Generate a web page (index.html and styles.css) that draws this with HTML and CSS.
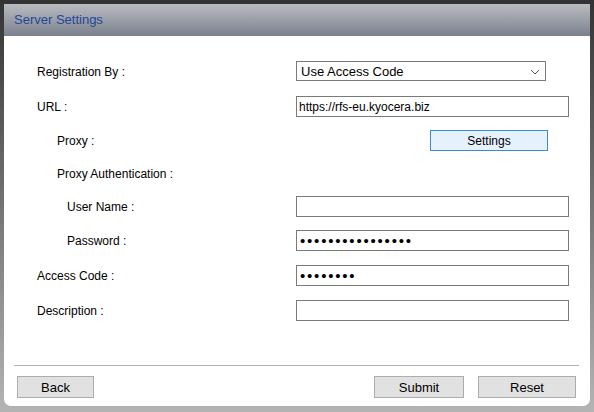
FILE: index.html
```html
<!DOCTYPE html>
<html lang="en">
<head>
  <meta charset="UTF-8" />
  <title>Server Settings</title>
  <link rel="stylesheet" href="styles.css">
</head>
<body>
  <div class="dialog">
    <div class="dialog-title">Server Settings</div>

    <div class="form">
      <div class="row">
        <label class="lbl">Registration By :</label>
        <div class="select-wrap">
          <select class="select">
            <option>Use Access Code</option>
            <option>Use Login Account</option>
          </select>
          <svg class="chevron" width="10" height="6" viewBox="0 0 10 6"><path d="M1 1 L5 5 L9 1" fill="none" stroke="#555" stroke-width="1"/></svg>
        </div>
      </div>
      <div class="row">
        <label class="lbl">URL :</label>
        <input class="field" type="text" value="https://rfs-eu.kyocera.biz" />
      </div>
      <div class="row tight">
        <label class="lbl sub">Proxy :</label>
        <button class="btn-settings">Settings</button>
      </div>
      <div class="row tight">
        <label class="lbl sub">Proxy Authentication :</label>
      </div>
      <div class="row tight">
        <label class="lbl subsub">User Name :</label>
        <input class="field" type="text" value="" />
      </div>
      <div class="row">
        <label class="lbl subsub">Password :</label>
        <input class="field" type="password" value="passwordpassword" />
      </div>
      <div class="row">
        <label class="lbl">Access Code :</label>
        <input class="field" type="password" value="12345678" />
      </div>
      <div class="row">
        <label class="lbl">Description :</label>
        <input class="field" type="text" value="" />
      </div>
    </div>

    <div class="footer">
      <button class="btn">Back</button>
      <div class="footer-right">
        <button class="btn btn-submit">Submit</button>
        <button class="btn btn-reset">Reset</button>
      </div>
    </div>
  </div>
</body>
</html>
```

FILE: styles.css
```css
html, body { margin: 0; height: 412px; }
body { background: linear-gradient(#333333 0%, #5a5a5a 30%, #a8a8a8 90%, #b4b4b4 100%); padding: 4px 4px 0 4px; box-sizing: border-box; font-family: "Liberation Sans", Arial, sans-serif; font-size: 12px; color: #000; }

.dialog { background: #fff; height: 402px; border-radius: 0 0 7px 7px; display: flex; flex-direction: column; }
.dialog-title { height: 32px; line-height: 32px; padding-left: 10px; font-size: 13px; color: #23479b; background: linear-gradient(#babbc0, #7a818d); }

.form { padding: 18px 0 0 33px; }
.row { height: 35px; display: flex; align-items: center; }
.row.tight { height: 33px; }
.lbl { width: 259px; flex: none; }
.lbl.sub { padding-left: 20px; width: 239px; }
.lbl.subsub { padding-left: 30px; width: 229px; }

.field { width: 273px; height: 21px; box-sizing: border-box; border: 1px solid #7a7a7a; padding: 0 2px; margin: 0; font-family: "Liberation Sans", Arial, sans-serif; font-size: 12px; outline: none; }
/* bigger, spaced bullets for masked values */
.field[type=password] { font-size: 15px; letter-spacing: 1.8px; padding-left: 3px; }

.select-wrap { position: relative; margin-top: -1px; }
.select { appearance: none; width: 250px; height: 20px; box-sizing: border-box; border: 1px solid #7a7a7a; background: #fff; padding: 0 4px; margin: 0; font-family: "Liberation Sans", Arial, sans-serif; font-size: 13px; color: #000; border-radius: 0; }
.chevron { position: absolute; right: 6px; top: 8px; pointer-events: none; }

.btn-settings { margin-left: 134px; width: 118px; height: 21px; background: #e5f1fb; border: 1px solid #3c8ad6; font-family: "Liberation Sans", Arial, sans-serif; font-size: 12px; color: #000; padding: 0; }

.footer { margin: auto 11px 0 10px; border-top: 1px solid #b2b2b2; padding: 10px 0 8px 3px; display: flex; justify-content: space-between; }
.footer-right { display: flex; gap: 14px; }
.btn { height: 22px; background: #e1e1e1; border: 1px solid #adadad; font-family: "Liberation Sans", Arial, sans-serif; font-size: 13px; color: #000; padding: 0; width: 77px; }
.btn-submit { width: 90px; }
.btn-reset { width: 98px; margin-right: 3px; }
```
